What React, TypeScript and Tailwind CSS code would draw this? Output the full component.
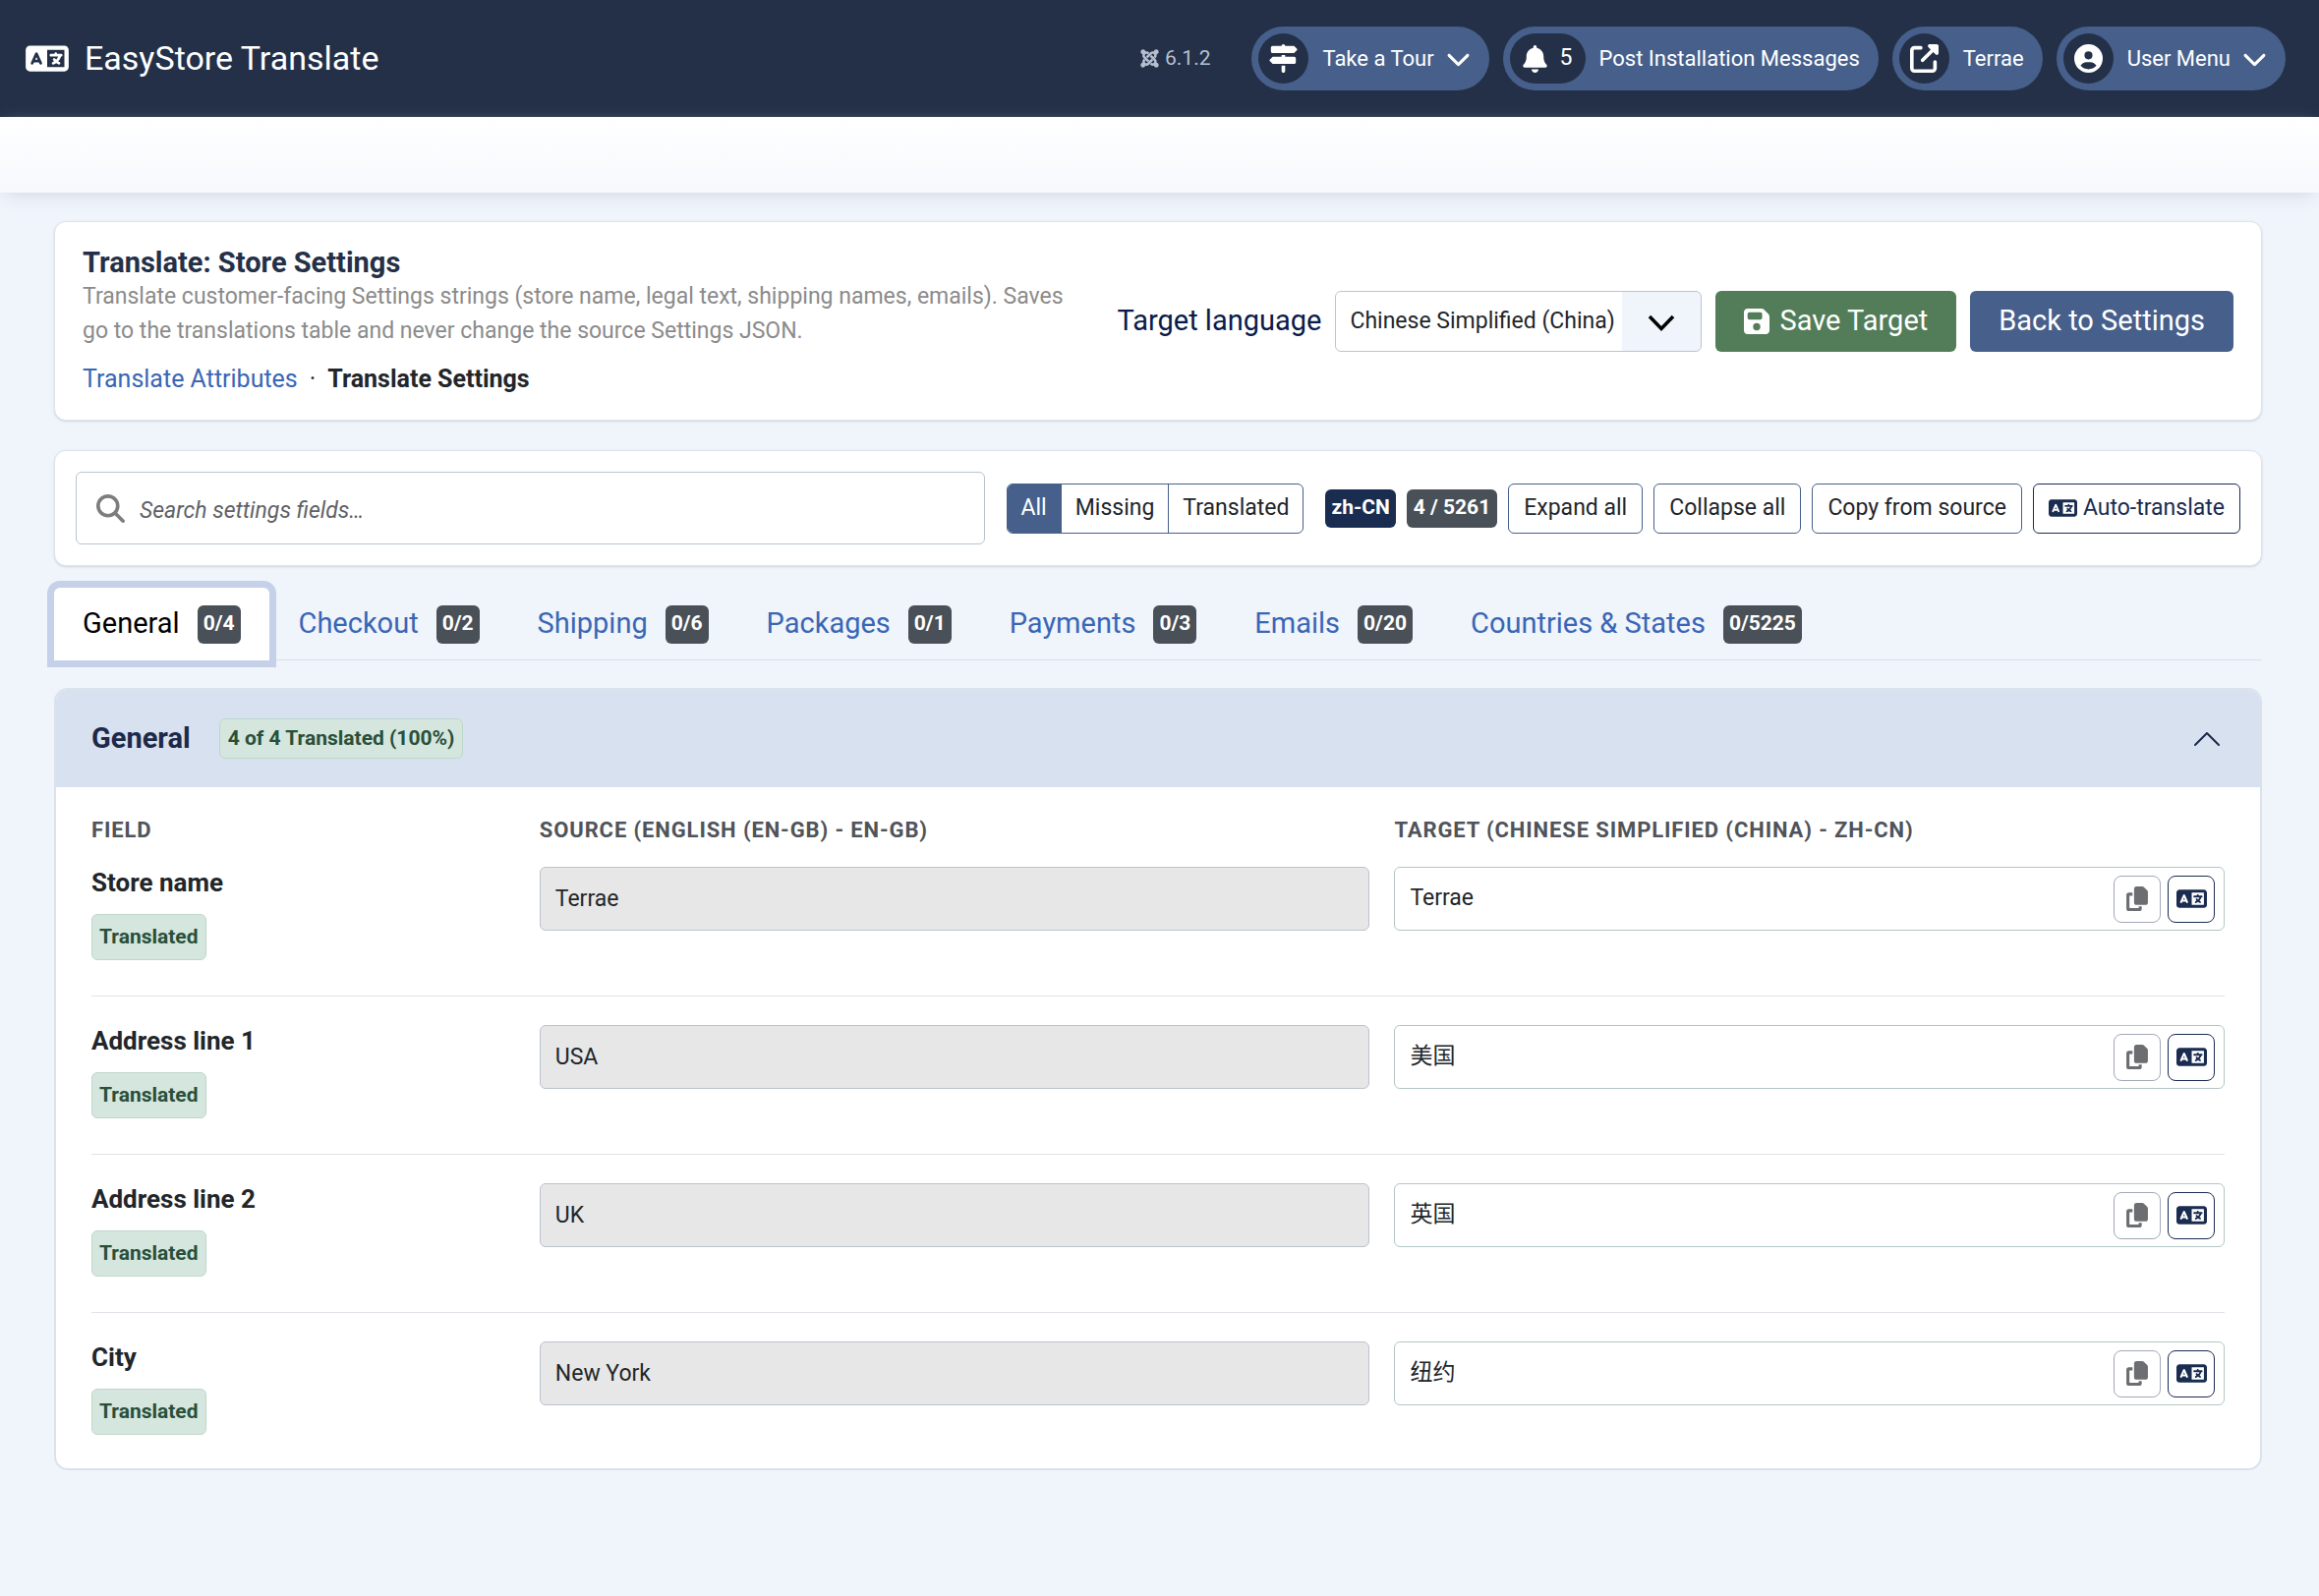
import { useState } from "react";
import type { ReactNode } from "react";
import clsx from "clsx";
import {
	FaBell,
	FaChevronDown,
	FaCircleUser,
	FaCopy,
	FaFloppyDisk,
	FaJoomla,
	FaLanguage,
	FaMagnifyingGlass,
	FaSignsPost,
	FaUpRightFromSquare,
} from "react-icons/fa6";
import { BsChevronUp } from "react-icons/bs";

const tabs = [
	{ name: "General", count: "0/4" },
	{ name: "Checkout", count: "0/2" },
	{ name: "Shipping", count: "0/6" },
	{ name: "Packages", count: "0/1" },
	{ name: "Payments", count: "0/3" },
	{ name: "Emails", count: "0/20" },
	{ name: "Countries & States", count: "0/5225" },
];

const fields = [
	{ id: "store-name", label: "Store name", source: "Terrae", target: "Terrae" },
	{ id: "address-1", label: "Address line 1", source: "USA", target: "美国" },
	{ id: "address-2", label: "Address line 2", source: "UK", target: "英国" },
	{ id: "city", label: "City", source: "New York", target: "纽约" },
];

const filters = ["All", "Missing", "Translated"];

type HeaderPillProps = {
	icon: ReactNode;
	label: string;
	count?: number;
	dropdown?: boolean;
};

function HeaderPill({ icon, label, count, dropdown }: HeaderPillProps) {
	return (
		<button className="flex h-[65px] items-center rounded-full bg-[#46608b] pl-[7px] pr-[19px] text-[22px] text-white">
			<span
				className={clsx(
					"flex h-[51px] items-center justify-center rounded-full bg-[#243047]",
					count === undefined ? "w-[51px]" : "gap-[13px] px-[13px]",
				)}
			>
				{icon}
				{count !== undefined && <span className="text-[23px]">{count}</span>}
			</span>
			<span className="ml-[14px]">{label}</span>
			{dropdown && <FaChevronDown className="ml-[12px] size-[25px]" />}
		</button>
	);
}

function Header() {
	return (
		<header className="flex h-[119px] items-center justify-between bg-[#243047] pl-[26px] pr-[34px] text-white">
			<div className="flex items-center gap-[16px]">
				<FaLanguage className="h-[35px] w-[44px]" />
				<h1 className="text-[34px]">EasyStore Translate</h1>
			</div>
			<div className="flex items-center gap-[14px]">
				<span className="mr-[28px] flex items-center gap-[5px] text-[21px] text-[#b4c0d0]">
					<FaJoomla className="size-[21px]" />
					6.1.2
				</span>
				<HeaderPill icon={<FaSignsPost className="size-[29px]" />} label="Take a Tour" dropdown />
				<HeaderPill icon={<FaBell className="h-[28px] w-[25px]" />} label="Post Installation Messages" count={5} />
				<HeaderPill icon={<FaUpRightFromSquare className="size-[29px]" />} label="Terrae" />
				<HeaderPill icon={<FaCircleUser className="size-[29px]" />} label="User Menu" dropdown />
			</div>
		</header>
	);
}

function CountBadge({ children, className }: { children: ReactNode; className?: string }) {
	return (
		<span
			className={clsx(
				"flex h-[39px] items-center rounded-[6px] text-[21px] font-bold whitespace-nowrap text-white",
				className ?? "bg-[#495057] px-[6px]",
			)}
		>
			{children}
		</span>
	);
}

function OutlineButton({ children, className }: { children: ReactNode; className?: string }) {
	return (
		<button
			className={clsx(
				"flex h-[51px] items-center gap-[6px] rounded-[6px] border px-[15px] text-[23px] whitespace-nowrap",
				className ?? "border-[#46608b] text-[#22262a]",
			)}
		>
			{children}
		</button>
	);
}

function TitleCard() {
	return (
		<section className="flex items-center justify-between gap-[50px] rounded-[12px] border border-[#dde4ef] bg-white px-[28px] pt-[24px] pb-[23px] shadow-sm">
			<div className="w-[1010px]">
				<h2 className="text-[29px] leading-[34px] font-bold text-[#243047]">Translate: Store Settings</h2>
				<p className="text-[23px] leading-[35px] text-[#8b8b8b]">
					Translate customer-facing Settings strings (store name, legal text, shipping names, emails). Saves go to the
					translations table and never change the source Settings JSON.
				</p>
				<nav className="mt-[14px] flex gap-[12px] text-[25px] leading-[36px]">
					<a href="#attributes" className="text-[#3a66b5]">
						Translate Attributes
					</a>
					<span className="text-[#22262a]">·</span>
					<a href="#settings" className="font-bold text-[#22262a]">
						Translate Settings
					</a>
				</nav>
			</div>
			<div className="flex shrink-0 items-center gap-[14px] text-[29px]">
				<label htmlFor="target-language" className="text-[#0a1b4b]">
					Target language
				</label>
				<div className="relative">
					<select
						id="target-language"
						className="h-[62px] w-[373px] appearance-none rounded-[6px] border border-[#bcc3d6] bg-[linear-gradient(to_left,#f0f4fb_80px,#fff_80px)] pr-[82px] pl-[14px] text-[23px] text-[#22262a]"
					>
						<option>Chinese Simplified (China)</option>
					</select>
					<svg
						viewBox="0 0 28 18"
						className="pointer-events-none absolute top-[24px] right-[27px] h-[18px] w-[28px] fill-none stroke-black stroke-[3.5]"
					>
						<path d="M2 2 14 14.5 26 2" />
					</svg>
				</div>
				<button className="flex h-[62px] items-center gap-[10px] rounded-[6px] bg-[#527d58] px-[29px] text-white">
					<FaFloppyDisk className="h-[30px] w-[26px]" />
					Save Target
				</button>
				<button className="h-[62px] rounded-[6px] bg-[#46608b] px-[29px] text-white">Back to Settings</button>
			</div>
		</section>
	);
}

function Toolbar() {
	const [filter, setFilter] = useState("All");

	return (
		<section className="mt-[30px] flex items-center gap-[22px] rounded-[12px] border border-[#dde4ef] bg-white p-[21px] shadow-sm">
			<div className="flex h-[74px] flex-1 items-center gap-[15px] rounded-[6px] border border-[#b9c4d0] px-[20px]">
				<FaMagnifyingGlass className="size-[29px] text-[#7c7d7f]" />
				<input
					type="search"
					aria-label="Search settings fields"
					placeholder="Search settings fields…"
					className="h-full flex-1 bg-transparent pt-[4px] text-[23px] outline-none placeholder:text-[#5f6266] placeholder:italic"
				/>
			</div>
			<div className="flex h-[51px] overflow-hidden rounded-[6px] border border-[#46608b] text-[23px]">
				{filters.map((name) => (
					<button
						key={name}
						onClick={() => setFilter(name)}
						className={clsx(
							"border-r border-[#46608b] px-[14px] last:border-r-0",
							name === filter ? "bg-[#46608b] text-white" : "text-[#22262a]",
						)}
					>
						{name}
					</button>
				))}
			</div>
			<div className="flex items-center gap-[11px]">
				<CountBadge className="bg-[#1a2c50] px-[6px]">zh-CN</CountBadge>
				<CountBadge className="bg-[#495057] px-[7px]">4 / 5261</CountBadge>
				<OutlineButton>Expand all</OutlineButton>
				<OutlineButton>Collapse all</OutlineButton>
				<OutlineButton>Copy from source</OutlineButton>
				<OutlineButton className="border-[#1a2c50] text-[#1a2c50]">
					<FaLanguage className="h-[24px] w-[29px]" />
					Auto-translate
				</OutlineButton>
			</div>
		</section>
	);
}

function Tabs() {
	const [active, setActive] = useState("General");

	return (
		<div role="tablist" className="mt-[22px] flex gap-px border-b border-[#d8dfea] text-[29px]">
			{tabs.map((tab) => (
				<button
					key={tab.name}
					role="tab"
					aria-selected={tab.name === active}
					onClick={() => setActive(tab.name)}
					className={clsx(
						"-mb-px flex h-[74px] items-center gap-[18px] rounded-t-[6px] px-[29px] whitespace-nowrap",
						tab.name === active
							? "relative bg-white text-black ring-[7px] ring-[#c4d1e8]"
							: "text-[#3a66b5]",
					)}
				>
					{tab.name}
					<CountBadge>{tab.count}</CountBadge>
				</button>
			))}
		</div>
	);
}

function FieldRow({ id, label, source, target }: (typeof fields)[number]) {
	return (
		<div className="grid grid-cols-[431fr_845fr_845fr] gap-x-[25px] border-b border-[#dfe3e7] pt-[29px] pb-[36px] first:pt-0 last:border-b-0 last:pb-0">
			<div>
				<label htmlFor={id} className="block text-[26px] leading-[32px] font-bold text-[#22262a]">
					{label}
				</label>
				<span className="mt-[16px] inline-flex h-[47px] items-center rounded-[6px] border border-[#bfd7ca] bg-[#d5e6de] px-[7px] text-[21px] font-bold text-[#28503a]">
					Translated
				</span>
			</div>
			<input
				readOnly
				aria-label={`${label} source`}
				value={source}
				className="h-[65px] w-full min-w-0 rounded-[6px] border border-[#bcc3cc] bg-[#e7e7e7] px-[15px] text-[23px] text-[#22262a]"
			/>
			<div className="flex h-[65px] items-center gap-[7px] rounded-[6px] border border-[#b5c6c6] pr-[9px] pl-[15px]">
				<input
					id={id}
					defaultValue={target}
					className="min-w-0 flex-1 text-[23px] text-[#22262a] outline-none"
				/>
				<button
					aria-label="Copy from source"
					className="flex size-[48px] items-center justify-center rounded-[8px] border border-[#a3a8b8] text-[#6d6e71]"
				>
					<FaCopy className="h-[25px] w-[22px]" />
				</button>
				<button
					aria-label="Auto-translate"
					className="flex size-[48px] items-center justify-center rounded-[8px] border border-[#1a2c50] text-[#1a2c50]"
				>
					<FaLanguage className="h-[25px] w-[31px]" />
				</button>
			</div>
		</div>
	);
}

function GeneralPanel() {
	return (
		<section className="mt-[28px] overflow-hidden rounded-[14px] border-2 border-[#dbe2ec] bg-white">
			<button className="flex h-[99px] w-full items-center gap-[29px] bg-[#d8e1ef] pr-[38px] pl-[36px]">
				<span className="text-[29px] font-bold text-[#1c2a4a]">General</span>
				<span className="flex h-[41px] items-center rounded-[6px] border border-[#bcd8cb] bg-[#d5e6de] px-[8px] text-[21px] font-bold text-[#28503a]">
					4 of 4 Translated (100%)
				</span>
				<BsChevronUp className="ml-auto size-[32px] text-[#1c2a4a]" />
			</button>
			<div className="px-[36px] pt-[29px] pb-[34px]">
				<div className="mb-[22px] grid grid-cols-[431fr_845fr_845fr] gap-x-[25px] text-[22px] leading-[30px] font-bold tracking-[0.04em] text-[#50545a] uppercase">
					<span>Field</span>
					<span>Source (English (en-GB) - en-GB)</span>
					<span>Target (Chinese Simplified (China) - zh-CN)</span>
				</div>
				<div>
					{fields.map((field) => (
						<FieldRow key={field.id} {...field} />
					))}
				</div>
			</div>
		</section>
	);
}

export default function App() {
	return (
		<div className="min-h-screen bg-[#f0f4fb] font-[Roboto,'Noto_Sans_CJK_SC',sans-serif]">
			<Header />
			<div className="h-[77px] bg-linear-to-b from-white to-[#f6f8fc] shadow-[0_6px_18px_-6px_#c9d3e4]" />
			<main className="pt-[29px] pr-[58px] pb-[80px] pl-[55px]">
				<TitleCard />
				<Toolbar />
				<Tabs />
				<GeneralPanel />
			</main>
		</div>
	);
}
